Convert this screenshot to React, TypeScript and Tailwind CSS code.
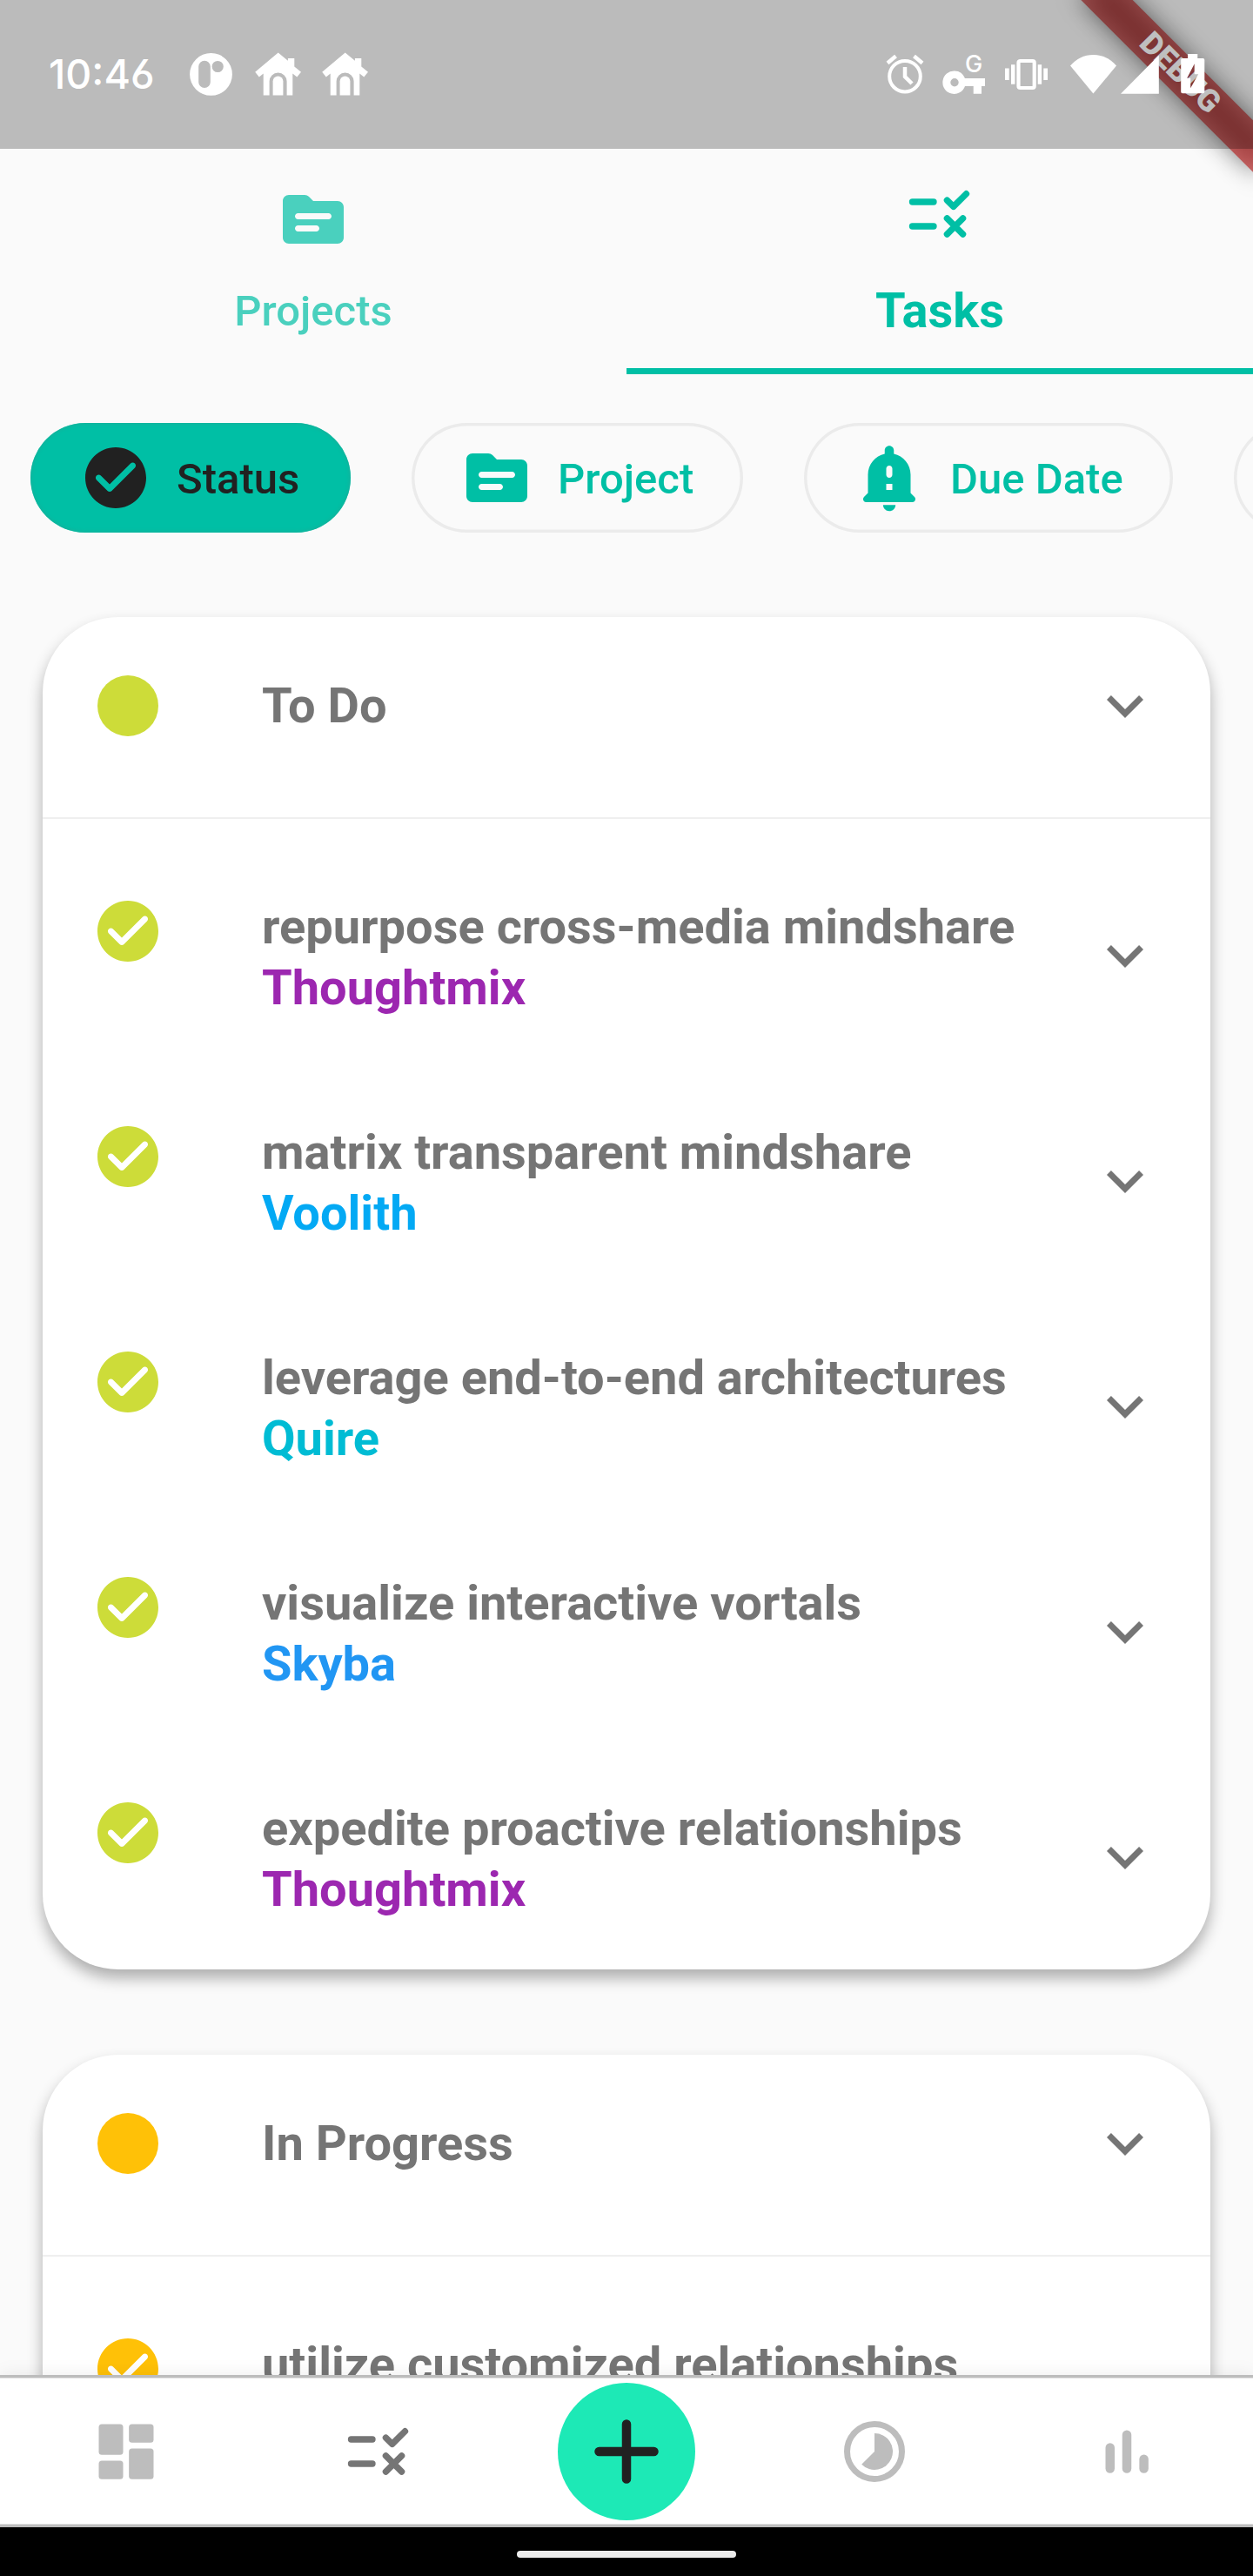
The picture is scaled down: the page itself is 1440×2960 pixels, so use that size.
import type { ReactNode } from "react";

const ROBOTO = "font-['Roboto','Noto_Sans',sans-serif]";

function Icon({ children, className = "size-[84px]" }: { children: ReactNode; className?: string }) {
  return (
    <svg viewBox="0 0 24 24" fill="currentColor" className={`block shrink-0 ${className}`}>
      {children}
    </svg>
  );
}

const SourceIcon = () => (
  <Icon>
    <path
      fillRule="evenodd"
      d="M20 6h-8l-1.41-1.41C10.21 4.21 9.7 4 9.17 4H4c-1.1 0-2 .9-2 2v12c0 1.1.9 2 2 2h16c1.1 0 2-.9 2-2V8c0-1.1-.9-2-2-2zm-7 10H7c-.55 0-1-.45-1-1s.45-1 1-1h6c.55 0 1 .45 1 1s-.45 1-1 1zm4-4H7c-.55 0-1-.45-1-1s.45-1 1-1h10c.55 0 1 .45 1 1s-.45 1-1 1z"
    />
  </Icon>
);

const RuleIcon = () => (
  <Icon>
    <g fill="none" stroke="currentColor" strokeWidth="2.1" strokeLinecap="round" strokeLinejoin="round">
      <path d="M3 8h7M3 16h7" />
      <path d="M14.4 7.45l2.1 2.1 4.2-4.2M14.4 13.4l5.2 5.2M19.6 13.4l-5.2 5.2" />
    </g>
  </Icon>
);

const CheckCircleIcon = () => (
  <Icon>
    <path
      fillRule="evenodd"
      d="M12 2C6.48 2 2 6.48 2 12s4.48 10 10 10 10-4.48 10-10S17.52 2 12 2zM9.29 16.29L5.7 12.7c-.39-.39-.39-1.02 0-1.41.39-.39 1.02-.39 1.41 0L10 14.17l6.88-6.88c.39-.39 1.02-.39 1.41 0 .39.39.39 1.02 0 1.41l-7.59 7.59c-.38.39-1.02.39-1.41 0z"
    />
  </Icon>
);

const DotIcon = () => (
  <Icon>
    <circle cx="12" cy="12" r="10" />
  </Icon>
);

const BellIcon = () => (
  <Icon>
    <path
      fillRule="evenodd"
      d="M19 17v-6c0-3.35-2.36-6.15-5.5-6.83V3c0-.83-.67-1.5-1.5-1.5s-1.5.67-1.5 1.5v1.17C7.36 4.85 5 7.65 5 11v6l-1.29 1.29c-.63.63-.19 1.71.7 1.71h15.17c.89 0 1.34-1.08.71-1.71L19 17zm-6-1h-2v-2h2v2zm0-5c0 .55-.45 1-1 1s-1-.45-1-1V9c0-.55.45-1 1-1s1 .45 1 1v2z"
    />
    <path d="M9.95 20.9h4.1c0 1.1-.95 2.05-2.05 2.05s-2.05-.95-2.05-2.05z" />
  </Icon>
);

const ChevronIcon = () => (
  <Icon>
    <path d="M16.59 8.59L12 13.17 7.41 8.59 6 10l6 6 6-6z" />
  </Icon>
);

const DashboardIcon = () => (
  <Icon>
    <rect x="3" y="3" width="8" height="10.1" rx="1" />
    <rect x="3" y="15" width="8" height="6.1" rx="1" />
    <rect x="12.9" y="3" width="8.1" height="6.1" rx="1" />
    <rect x="12.9" y="11" width="8.1" height="10.1" rx="1" />
  </Icon>
);

const TimelapseIcon = () => (
  <Icon>
    <circle cx="12" cy="12" r="9" fill="none" stroke="currentColor" strokeWidth="2" />
    <path d="M12 6a6 6 0 1 1-4.24 10.24L12 12z" />
  </Icon>
);

const ChartIcon = () => (
  <Icon>
    <rect x="5" y="9.2" width="3" height="9.9" rx="1.5" />
    <rect x="10.5" y="5" width="3" height="14.1" rx="1.5" />
    <rect x="16.1" y="13" width="3" height="6.1" rx="1.5" />
  </Icon>
);

const PlusIcon = () => (
  <Icon className="size-[126px]">
    <path d="M6 12h12M12 6v12" stroke="currentColor" strokeWidth="2" strokeLinecap="round" />
  </Icon>
);

const HouseIcon = () => (
  <svg viewBox="0 0 54 50" fill="currentColor" className="block h-[50px] w-[54px] shrink-0">
    <path d="M26.7.6l11.2 9.1V7h7.4v9.5l7.7 6.2-4.7 5.7-5-3.900v24.900h-6.700V33.500a10 10 0 0 0-20 0v15.900H9.700V24.500l-4.900 3.900L.2 22.700z" />
    <path d="M20.6 49.4V33.5a5.9 5.9 0 0 1 11.8 0v15.9z" />
  </svg>
);

function StatusBar() {
  return (
    <div className="relative z-20 flex h-[171px] shrink-0 items-start bg-black/25 text-white">
      <div className="ml-[56px] mt-[57px] w-[162px] whitespace-nowrap font-['Inter',sans-serif] text-[46.5px] font-medium leading-[56px] [font-feature-settings:'cv03']">
        10:46
      </div>
      <svg viewBox="0 0 50 50" fill="currentColor" className="mt-[60px] block size-[50px]">
        <path
          fillRule="evenodd"
          d="M24.5 1a24.4 24.4 0 1 0 0 48.8 24.4 24.4 0 0 0 0-48.8zM17 9.8a6.8 6.8 0 0 1 6.8 6.8v17.6a6.8 6.8 0 0 1-13.6 0V16.6A6.8 6.8 0 0 1 17 9.8zM32.2 9.9a6.6 6.6 0 1 1 0 13.2 6.6 6.6 0 0 1 0-13.2z"
        />
      </svg>
      <div className="ml-[25px] mt-[60px] flex gap-[23px]">
        <HouseIcon />
        <HouseIcon />
      </div>
      <div className="ml-auto mr-[55px] mt-[60px] flex h-[52px] items-start">
        <svg viewBox="0 0 44 50" fill="none" stroke="currentColor" className="block h-[50px] w-[44px]">
          <circle cx="22" cy="27.7" r="17.8" strokeWidth="4" />
          <path d="M22 17v11l8 8" strokeWidth="4.5" />
          <path d="M2 12.5l9.5-8M42 12.5l-9.5-8" strokeWidth="4.5" />
        </svg>
        <svg viewBox="0 0 50 50" fill="currentColor" className="ml-[21px] block h-[50px] w-[50px] overflow-visible">
          <path
            fillRule="evenodd"
            d="M14 21.5a13.2 13.2 0 0 1 12 8.500h23v9h-4v8.700h-9.300V39H26a13.200 13.200 0 1 1-12-17.500zm0 8.500a4.700 4.700 0 1 0 0 9.400 4.700 4.700 0 0 0 0-9.400z"
          />
          <text x="26" y="23" fontSize="27" fontWeight="500" fontFamily="Inter, Roboto, sans-serif">
            G
          </text>
        </svg>
        <svg viewBox="0 0 50 50" fill="currentColor" className="ml-[22px] block h-[50px] w-[50px]">
          <rect x="15.5" y="10" width="18.2" height="31" rx="2" fill="none" stroke="currentColor" strokeWidth="4.2" />
          <path d="M0 18.5h4.7V32H0zM7 14.2h4.4v22.5H7zM37.7 14.2h4.4v22.5h-4.4zM44.3 18.5H49V32h-4.7z" />
        </svg>
        <svg viewBox="0 0 53 50" fill="currentColor" className="ml-[25px] block h-[50px] w-[53px]">
          <path d="M26.4 47.5L0 15.6C7 7.5 16 3.1 26.5 3.1S46 7.5 53 15.6z" />
        </svg>
        <svg viewBox="0 0 44 50" fill="currentColor" className="ml-[5px] block h-[50px] w-[44px]">
          <path d="M0 47.7L43.8 3.5v44.2z" />
        </svg>
        <svg viewBox="0 0 28 50" fill="currentColor" className="ml-[25px] block h-[50px] w-[28px]">
          <path
            fillRule="evenodd"
            d="M8 2h11.3v5h6.200Q27.300 7 27.300 8.800v36.700q0 1.800-1.800 1.800h-23.500Q.2 47.300.2 45.500V8.800Q.2 7 2 7h6zM15.700 13.300L7.200 29.700h4v11.500l9-16h-4.500z"
          />
        </svg>
      </div>
    </div>
  );
}

function DebugBanner() {
  return (
    <div className="pointer-events-none absolute left-[1216px] top-[63px] z-10 h-[42px] w-[280px] rotate-45">
      <div className="absolute inset-0 bg-black/50 blur-[14px]" />
      <div className="relative flex h-full items-center justify-center bg-[#b71c1c]/63 text-[35.7px] font-black leading-none text-white">
        DEBUG
      </div>
    </div>
  );
}

function Tabs() {
  return (
    <div className="flex h-[259px] shrink-0 text-[#00bfa5]">
      <div className="flex w-1/2 flex-col items-center pt-[39px] opacity-70">
        <SourceIcon />
        <span className="mt-[35px] text-[49px] font-medium leading-[58px]">Projects</span>
      </div>
      <div className="flex w-1/2 flex-col items-center border-b-[7px] border-[#00bfa5] pt-[33px]">
        <RuleIcon />
        <span className="mt-[36px] text-[56px] font-bold leading-[66px]">Tasks</span>
      </div>
    </div>
  );
}

function Chip({ icon, label, className }: { icon?: ReactNode; label?: string; className: string }) {
  return (
    <div
      className={`flex h-[126px] shrink-0 items-center gap-[28px] whitespace-nowrap rounded-full pl-[56px] text-[49px] font-medium ${className}`}
    >
      {icon}
      {label && <span className="pt-[3px]">{label}</span>}
    </div>
  );
}

function Chips() {
  return (
    <div className="mt-[56px] flex shrink-0 gap-[70px] overflow-hidden pl-[35px]">
      <Chip
        icon={<CheckCircleIcon />}
        label="Status"
        className="w-[368px] bg-[#00bfa5] text-[#212121] shadow-[inset_0_0_4px_1px_#17b09a]"
      />
      <Chip
        icon={<SourceIcon />}
        label="Project"
        className="w-[381px] text-[#00bfa5] shadow-[inset_0_0_0_3.5px_#ebebeb]"
      />
      <Chip
        icon={<BellIcon />}
        label="Due Date"
        className="w-[424px] text-[#00bfa5] shadow-[inset_0_0_0_3.5px_#ebebeb]"
      />
      <Chip className="w-[380px] shadow-[inset_0_0_0_3.5px_#ebebeb]" />
    </div>
  );
}

type Task = { title: string; project?: string; tone?: string };

function TaskRow({ task, tone }: { task: Task; tone: string }) {
  return (
    <div className="flex h-[259px] px-[56px]">
      <div className={`pt-[60px] ${tone}`}>
        <CheckCircleIcon />
      </div>
      <div className="ml-[112px] flex-1 whitespace-nowrap pt-[62px] text-[56px] font-bold leading-[70px]">
        <div>{task.title}</div>
        {task.project && <div className={task.tone}>{task.project}</div>}
      </div>
      <div className="pt-[88px]">
        <ChevronIcon />
      </div>
    </div>
  );
}

function Card({ title, tone, tasks }: { title: string; tone: string; tasks: Task[] }) {
  return (
    <section className="mx-[49px] shrink-0 rounded-[87px] bg-white text-[#757575] shadow-[0_10px_17px_rgba(0,0,0,0.31)]">
      <header className="flex h-[232px] items-start border-b-2 border-[#efefef] px-[56px] pt-[60px]">
        <div className={tone}>
          <DotIcon />
        </div>
        <h2 className="ml-[112px] flex-1 text-[56px] font-bold leading-[84px]">{title}</h2>
        <ChevronIcon />
      </header>
      <div className="pt-[27px]">
        {tasks.map((task) => (
          <TaskRow key={task.title} task={task} tone={tone} />
        ))}
      </div>
    </section>
  );
}

const TODO: Task[] = [
  { title: "repurpose cross-media mindshare", project: "Thoughtmix", tone: "text-[#9c27b0]" },
  { title: "matrix transparent mindshare", project: "Voolith", tone: "text-[#03a9f4]" },
  { title: "leverage end-to-end architectures", project: "Quire", tone: "text-[#00bcd4]" },
  { title: "visualize interactive vortals", project: "Skyba", tone: "text-[#2196f3]" },
  { title: "expedite proactive relationships", project: "Thoughtmix", tone: "text-[#9c27b0]" },
];

const IN_PROGRESS: Task[] = [{ title: "utilize customized relationships" }];

function NavItem({ children, className }: { children: ReactNode; className: string }) {
  return <div className={`flex w-[168px] justify-center ${className}`}>{children}</div>;
}

function BottomNav() {
  return (
    <nav className="relative z-10 flex h-[175px] shrink-0 items-center justify-around bg-white shadow-[inset_0_3.5px_0_#bdbdbd,inset_0_-3.5px_0_#bdbdbd,0_0_20px_rgba(0,0,0,0.08)]">
      <NavItem className="text-[#bdbdbd]">
        <DashboardIcon />
      </NavItem>
      <NavItem className="text-[#757575]">
        <RuleIcon />
      </NavItem>
      <div className="flex size-[158px] items-center justify-center rounded-full bg-[#1de9b6] text-[#212121]">
        <PlusIcon />
      </div>
      <NavItem className="text-[#bdbdbd]">
        <TimelapseIcon />
      </NavItem>
      <NavItem className="text-[#bdbdbd]">
        <ChartIcon />
      </NavItem>
    </nav>
  );
}

export default function App() {
  return (
    <div className={`relative flex h-[2960px] w-[1440px] flex-col overflow-hidden bg-[#fafafa] ${ROBOTO}`}>
      <StatusBar />
      <DebugBanner />
      <Tabs />
      <Chips />
      <main className="mt-[50px] flex min-h-0 flex-1 flex-col gap-[98px] overflow-hidden pt-[47px]">
        <Card title="To Do" tone="text-[#cddc39]" tasks={TODO} />
        <Card title="In Progress" tone="text-[#ffc107]" tasks={IN_PROGRESS} />
      </main>
      <BottomNav />
      <div className="flex h-[56px] shrink-0 justify-center bg-black pt-[27px]">
        <div className="h-[8px] w-[252px] rounded-full bg-[#ebebeb]" />
      </div>
    </div>
  );
}
